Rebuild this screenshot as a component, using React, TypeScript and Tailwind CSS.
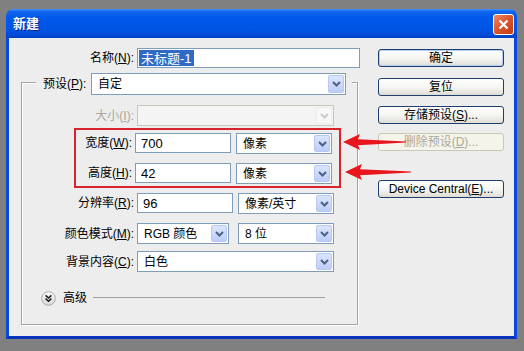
import React from 'react';

const F = "font-['Liberation_Sans','Noto_Sans_CJK_SC',sans-serif]";

function Chevron({ disabled }: { disabled?: boolean }) {
  return (
    <svg width="9" height="6" viewBox="0 0 9 6">
      <path
        d="M1 1L4.5 4.5L8 1"
        fill="none"
        stroke={disabled ? '#c9c9c9' : '#4d6185'}
        strokeWidth="2"
      />
    </svg>
  );
}

function Combo({
  className,
  text,
  disabled,
}: {
  className: string;
  text?: string;
  disabled?: boolean;
}) {
  return (
    <div
      className={`flex items-stretch border p-px ${
        disabled ? 'border-[#c9c7ba] bg-[#f4f4f4]' : 'border-[#7f9db9] bg-white'
      } ${className}`}
    >
      <span className="flex flex-1 items-center pl-[5px] text-[12px] leading-none text-black">{text}</span>
      <span
        className={`flex w-[16px] items-center justify-center rounded-[2px] border ${
          disabled
            ? 'border-[#ececec] bg-[#f8f8f8]'
            : 'border-[#b7c8f2] bg-[linear-gradient(to_bottom,#dbe5fd,#bccdf7)]'
        }`}
      >
        <Chevron disabled={disabled} />
      </span>
    </div>
  );
}

function TextBox({ className, text }: { className: string; text: string }) {
  return (
    <div className={`flex h-[20px] items-center border border-[#7f9db9] bg-white pl-[5px] text-[13px] leading-none text-black ${className}`}>
      {text}
    </div>
  );
}

function Btn({
  children,
  className,
  disabled,
  def,
}: {
  children: React.ReactNode;
  className?: string;
  disabled?: boolean;
  def?: boolean;
}) {
  return (
    <div
      className={`flex h-[18px] w-[126px] items-center justify-center rounded-[3px] border text-[12px] leading-none ${
        disabled
          ? 'border-[#c9c7ba] bg-[#f5f4ea] text-[#aca899]'
          : 'border-[#1c3f6e] bg-[linear-gradient(to_bottom,#ffffff,#f4f4f0_55%,#dedcd4)] text-black'
      } ${def ? 'shadow-[inset_0_0_0_1px_#b4cdf0]' : ''} ${className ?? ''}`}
    >
      {children}
    </div>
  );
}

export default function App() {
  return (
    <div className={`relative h-[351px] w-[524px] overflow-hidden bg-[#808080] pl-[6px] pt-[9px] ${F}`}>
      <div className="flex h-[330px] w-[511px] flex-col">
        {/* title bar */}
        <div className="flex h-[29px] items-start justify-between rounded-t-[7px] bg-[linear-gradient(to_bottom,#4a93f8_0%,#1266ee_8%,#0058ea_30%,#0054e3_70%,#004ad6_90%,#003fc2_100%)] pl-[7px] pr-[3px] pt-[5px]">
          <span className="mt-[2px] text-[13px] font-bold leading-[16px] text-white [text-shadow:1px_1px_0_#0a2a8a]">新建</span>
          <div className="flex h-[21px] w-[21px] items-center justify-center rounded-[3px] border border-white bg-[linear-gradient(135deg,#f08a66,#d9532c_50%,#c23e18)]">
            <svg width="11" height="11" viewBox="0 0 11 11">
              <path d="M1.5 1.5L9.5 9.5M9.5 1.5L1.5 9.5" stroke="#fff" strokeWidth="2.2" />
            </svg>
          </div>
        </div>
        {/* body */}
        <div className="flex flex-1 border-x-[3px] border-b-[3px] border-x-[#0a47dc] border-b-[#0934c0] bg-[#ededed]">
          {/* left column */}
          <div className="flex w-[351px] flex-col">
            <div className="mt-[10px] flex items-center">
              <span className="w-[125px] text-right text-[12px] leading-none">
                名称(<span className="underline">N</span>):
              </span>
              <div className="ml-[3px] flex h-[20px] w-[223px] items-center border border-[#7f9db9] bg-white pl-px">
                <span className="flex h-[16px] items-center bg-[#316ac5] px-[2px] text-[13px] leading-none text-white">未标题-1</span>
              </div>
            </div>

            {/* group box */}
            <div className="ml-[12px] mt-[14px] flex h-[243px] w-[337px] flex-col border border-[#a5a5a5] shadow-[inset_1px_1px_0_#fff,1px_1px_0_#fff]">
              {/* legend */}
              <div className="-mt-[10px] ml-[14px] flex h-[22px] w-[316px] items-center bg-[#ededed] pl-[7px] pr-[6px]">
                <span className="w-[48px] text-[12px] leading-none">
                  预设(<span className="underline">P</span>):
                </span>
                <Combo className="h-[22px] w-[255px]" text="自定" />
              </div>

              {/* size */}
              <div className="mt-[10px] flex h-[21px] items-center">
                <span className="w-[112px] text-right text-[12px] leading-none text-[#aca899]">
                  大小(<span className="underline">I</span>):
                </span>
                <Combo className="ml-[3px] h-[21px] w-[197px]" disabled />
              </div>

              {/* red box */}
              <div className="ml-[52px] mt-[2px] flex w-[267px] flex-col border-2 border-[#d8232d] pb-[2px] pt-[3px]">
                <div className="flex h-[21px] items-start">
                  <span className="flex h-[20px] w-[56px] items-center justify-end text-[12px] leading-none">
                    宽度(<span className="underline">W</span>):
                  </span>
                  <TextBox className="ml-[3px] w-[96px]" text="700" />
                  <Combo className="ml-[5px] h-[21px] w-[96px]" text="像素" />
                </div>
                <div className="mt-[9px] flex h-[21px] items-start">
                  <span className="flex h-[20px] w-[56px] items-center justify-end text-[12px] leading-none">
                    高度(<span className="underline">H</span>):
                  </span>
                  <TextBox className="ml-[3px] w-[96px]" text="42" />
                  <Combo className="ml-[5px] h-[21px] w-[96px]" text="像素" />
                </div>
              </div>

              {/* resolution */}
              <div className="mt-[5px] flex h-[21px] items-start">
                <span className="flex h-[20px] w-[112px] items-center justify-end text-[12px] leading-none">
                  分辨率(<span className="underline">R</span>):
                </span>
                <TextBox className="ml-[3px] w-[96px]" text="96" />
                <Combo className="ml-[5px] h-[21px] w-[96px]" text="像素/英寸" />
              </div>

              {/* color mode */}
              <div className="mt-[9px] flex h-[21px] items-center">
                <span className="w-[112px] text-right text-[12px] leading-none">
                  颜色模式(<span className="underline">M</span>):
                </span>
                <Combo className="ml-[3px] h-[21px] w-[92px]" text="RGB 颜色" />
                <Combo className="ml-[9px] h-[21px] w-[96px]" text="8 位" />
              </div>

              {/* background */}
              <div className="mt-[7px] flex h-[21px] items-center">
                <span className="w-[112px] text-right text-[12px] leading-none">
                  背景内容(<span className="underline">C</span>):
                </span>
                <Combo className="ml-[3px] h-[21px] w-[197px]" text="白色" />
              </div>

              {/* advanced */}
              <div className="ml-[19px] mt-[18px] flex h-[16px] items-center">
                <svg width="15" height="15" viewBox="0 0 15 15">
                  <defs>
                    <linearGradient id="adv" x1="0" y1="0" x2="0" y2="1">
                      <stop offset="0" stopColor="#ffffff" />
                      <stop offset="1" stopColor="#d6d6d6" />
                    </linearGradient>
                  </defs>
                  <circle cx="7.5" cy="7.5" r="6.8" fill="url(#adv)" stroke="#a8a8a8" />
                  <path d="M4.6 4.4L7.5 7.1L10.4 4.4M4.6 7.6L7.5 10.3L10.4 7.6" fill="none" stroke="#1a1a1a" strokeWidth="1.5" />
                </svg>
                <span className="ml-[7px] text-[12px] leading-none">高级</span>
                <div className="ml-[6px] h-[2px] w-[232px] border-t border-[#a0a0a0] border-b-white" />
              </div>
            </div>
          </div>

          {/* right column */}
          <div className="ml-[18px] flex flex-col">
            <Btn className="mt-[11px]" def>确定</Btn>
            <Btn className="mt-[11px]">复位</Btn>
            <Btn className="mt-[10px]">
              存储预设(<span className="underline">S</span>)...
            </Btn>
            <Btn className="mt-[9px]" disabled>
              删除预设(<span className="underline">D</span>)...
            </Btn>
            <Btn className="mt-[29px] text-[11.5px]">
              Device Central(<span className="underline">E</span>)...
            </Btn>
          </div>
        </div>
      </div>

      {/* red annotation arrows */}
      <svg className="pointer-events-none absolute left-0 top-0" width="524" height="351" viewBox="0 0 524 351">
        <path d="M343 142L360 134L358 139.2L406 141.4L406 142.6L358 145.3L360 150Z" fill="#e8161c" />
        <path d="M345 172L362 164L360 169.2L411 171.4L411 172.6L360 175.3L362 180Z" fill="#e8161c" />
      </svg>
    </div>
  );
}
